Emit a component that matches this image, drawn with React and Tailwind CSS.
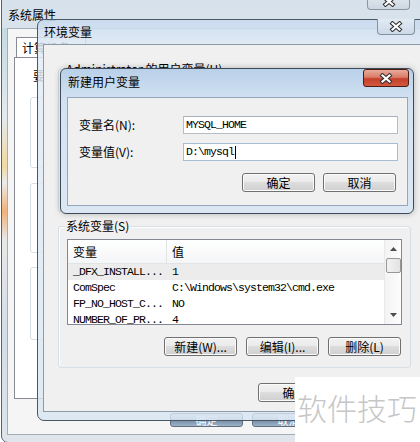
import React from "react";

const sysVars = [
  ["_DFX_INSTALL...", "1"],
  ["ComSpec", "C:\\Windows\\system32\\cmd.exe"],
  ["FP_NO_HOST_C...", "NO"],
  ["NUMBER_OF_PR...", "4"],
];

function CloseGlyph() {
  return (
    <svg width="14" height="11" viewBox="0 0 14 11">
      <path d="M3.5 2.5L10.5 8.5M10.5 2.5L3.5 8.5" stroke="#2f2f2f" strokeWidth="4.2" strokeLinecap="square" />
      <path d="M3.5 2.5L10.5 8.5M10.5 2.5L3.5 8.5" stroke="#ffffff" strokeWidth="2.2" strokeLinecap="square" />
    </svg>
  );
}

function Button({ children, className = "" }) {
  return (
    <div
      className={`flex h-[19px] w-[73px] items-center justify-center rounded-[3px] border border-[#707070] bg-[linear-gradient(180deg,#f2f2f2_0%,#ebebeb_45%,#dddddd_50%,#cfcfcf_100%)] text-[12px] leading-[14px] shadow-[inset_0_0_0_1px_#fbfbfb] ${className}`}
    >
      {children}
    </div>
  );
}

function GroupBox({ label, className = "", children }) {
  return (
    <div className={`relative rounded-[3px] border border-[#d5dfe5] shadow-[inset_1px_1px_0_#ffffff] ${className}`}>
      {label && (
        <span className="absolute left-[6px] top-[-8px] bg-[#f0f0f0] px-[1px] leading-[14px]">{label}</span>
      )}
      {children}
    </div>
  );
}

export default function App() {
  return (
    <div className="relative h-[442px] w-[420px] overflow-hidden bg-white font-['Noto_Sans_CJK_SC','Noto_Sans',sans-serif] text-[12px] text-black">
      {/* 系统属性 (background window) */}
      <div className="absolute left-[1px] top-[-6px] flex h-[449px] w-[440px] flex-col rounded-[7px] border border-[#56616d] bg-[linear-gradient(180deg,#d6e1eb_0%,#e3e9ef_30%,#dfe5eb_100%)]">
        <div className="relative h-[33px] shrink-0 pl-[6px] pt-[13px] leading-[14px]">
          系统属性
          <div className="absolute left-[365px] top-[-1px] flex h-[16px] w-[43px] items-center justify-center rounded-b-[4px] border border-t-0 border-[#8a96a3] bg-[linear-gradient(180deg,#e4eaf0,#cdd7e1)]">
            <CloseGlyph />
          </div>
        </div>
        <div className="flex flex-1">
          <div className="w-[5px] shrink-0 bg-[linear-gradient(180deg,#c3dbe2_0%,#e4eaee_22%,#f1d9a2_34%,#ececec_38%,#efb27a_45%,#e8e8e8_52%,#d3dde7_75%,#dde4ea_100%)]" />
          <div className="flex-1 border border-[#a3adb8] bg-[#f5f5f5] pl-[6px] pt-[8px]">
            <div className="ml-[2px] h-[21px] w-[70px] border border-b-0 border-[#898c95] bg-white pl-[5px] pt-[3px] leading-[14px]">
              计算机名
            </div>
            <div className="-mt-px h-[342px] w-[400px] border border-[#898c95] bg-white pl-[15px] pt-[11px]">
              <p className="ml-[3px] leading-[14px]">要进行大多数更改，您必须作为管理员登录。</p>
              <div className="mt-[14px] h-[71px] w-[360px] rounded-[3px] border border-[#d5dfe5]" />
              <div className="mt-[15px] h-[70px] w-[360px] rounded-[3px] border border-[#d5dfe5]" />
              <div className="mt-[14px] h-[73px] w-[360px] rounded-[3px] border border-[#d5dfe5]" />
            </div>
            <div className="ml-[156px] mt-[14px] flex gap-[9px]">
              {["确定", "取消", ""].map((t, i) => (
                <div
                  key={i}
                  className="flex h-[14px] w-[73px] items-center justify-center rounded-[3px] border border-[#5f6f80] bg-[linear-gradient(180deg,#dfe8f1_0%,#b4c4d6_40%,#7d94ad_60%,#9fb2c6_100%)] text-[11px] leading-none text-white"
                >
                  {t}
                </div>
              ))}
            </div>
          </div>
        </div>
        <div className="h-[7px] shrink-0" />
      </div>

      {/* 环境变量 */}
      <div className="absolute left-[37px] top-[19px] flex h-[402px] w-[395px] flex-col rounded-[7px] border border-[#4a5866] bg-[linear-gradient(180deg,rgba(200,218,238,0.85)_0%,rgba(226,236,246,0.85)_8%,rgba(216,229,242,0.8)_100%)]">
        <div className="relative h-[24px] shrink-0 pl-[6px] pt-[5px] leading-[14px]">
          环境变量
          <div className="absolute left-[339px] top-[-1px] flex h-[16px] w-[38px] items-center justify-center rounded-b-[4px] border border-t-0 border-[#8593a1] bg-[linear-gradient(180deg,#e2ebf4,#cbd9e7)]">
            <CloseGlyph />
          </div>
        </div>
        <div className="flex flex-1 px-[5px]">
          <div className="flex-1 border border-[#8d9aa8] bg-[#f0f0f0] px-[14px]">
            <GroupBox label="Administrator 的用户变量(U)" className="mt-[24px] h-[143px]" />
            <GroupBox label="系统变量(S)" className="mt-[14px] h-[142px] pl-[8px] pt-[12px]">
              <div className="flex h-[86px] w-[335px] overflow-hidden border border-[#828790] bg-white">
                <div className="flex-1">
                  <div className="flex h-[24px] border-b border-[#e2e3e5] bg-[linear-gradient(180deg,#ffffff,#f4f5f7)] leading-[14px]">
                    <div className="flex w-[99px] items-center border-r border-[#e2e3e5] pl-[5px]">变量</div>
                    <div className="flex items-center pl-[5px]">值</div>
                  </div>
                  {sysVars.map(([name, value], i) => (
                    <div
                      key={name}
                      className={`flex h-[16px] items-center font-['Liberation_Mono','DejaVu_Sans_Mono',monospace] text-[11.5px] leading-[16px] tracking-[-0.9px] ${i === 0 ? "bg-[#ececec]" : ""}`}
                    >
                      <div className="w-[99px] pl-[5px]">{name}</div>
                      <div className="pl-[5px]">{value}</div>
                    </div>
                  ))}
                </div>
                <div className="flex w-[17px] shrink-0 flex-col items-center border-l border-[#e9e9e9] bg-[linear-gradient(90deg,#f3f3f3,#fdfdfd)]">
                  <div className="flex h-[18px] items-center justify-center">
                    <svg width="7" height="4" viewBox="0 0 7 4">
                      <path d="M3.5 0L7 4H0Z" fill="#4d4d4d" />
                    </svg>
                  </div>
                  <div className="h-[15px] w-[15px] rounded-[2px] border border-[#979797] bg-[linear-gradient(90deg,#f2f2f2,#e3e3e3)]" />
                  <div className="flex-1" />
                  <div className="flex h-[18px] items-center justify-center">
                    <svg width="7" height="4" viewBox="0 0 7 4">
                      <path d="M0 0H7L3.5 4Z" fill="#4d4d4d" />
                    </svg>
                  </div>
                </div>
              </div>
              <div className="mt-[12px] flex justify-end gap-[9px] pr-[9px]">
                <Button className="w-[72px]">新建(W)...</Button>
                <Button>编辑(I)...</Button>
                <Button>删除(L)</Button>
              </div>
            </GroupBox>
            <div className="mt-[15px] flex justify-end gap-[7px]">
              <Button>确定</Button>
              <Button />
            </div>
          </div>
        </div>
        <div className="h-[8px] shrink-0" />
      </div>

      {/* 新建用户变量 */}
      <div className="absolute left-[60px] top-[68px] flex h-[146px] w-[354px] flex-col rounded-[6px] border border-[#3c4a59] bg-[linear-gradient(180deg,#b9d0e9_0%,#d3e2f2_22%,#dbe7f3_100%)] shadow-[0_0_6px_rgba(0,0,0,0.25)]">
        <div className="relative h-[28px] shrink-0 pl-[7px] pt-[6px] leading-[14px]">
          新建用户变量
          <div className="absolute left-[302px] top-0 flex h-[18px] w-[46px] items-center justify-center rounded-[3px] border border-[#4a1c14] bg-[linear-gradient(180deg,#e8aa9a_0%,#d97c68_45%,#c4412c_55%,#d2593f_100%)]">
            <CloseGlyph />
          </div>
        </div>
        <div className="flex flex-1 pl-[6px] pr-[5px]">
          <div className="flex-1 border border-[#93a6ba] bg-[#f0f0f0] pl-[11px] pr-[9px] pt-[18px]">
            <div className="flex h-[18px] items-center">
              <span className="w-[104px] leading-[14px]">变量名(N):</span>
              <div className="flex h-[18px] flex-1 items-center border border-[#b6bdc5] border-t-[#a9b0b8] bg-white pl-[2px] font-['Liberation_Mono','DejaVu_Sans_Mono',monospace] text-[11.5px] tracking-[-0.9px]">
                MYSQL_HOME
              </div>
            </div>
            <div className="mt-[9px] flex h-[18px] items-center">
              <span className="w-[104px] leading-[14px]">变量值(V):</span>
              <div className="flex h-[18px] flex-1 items-center border border-[#a7bdd5] bg-white pl-[2px] font-['Liberation_Mono','DejaVu_Sans_Mono',monospace] text-[11.5px] tracking-[-0.9px]">
                D:\mysql
                <span className="ml-[1px] h-[13px] w-px bg-black" />
              </div>
            </div>
            <div className="mt-[12px] flex justify-end gap-[8px] pr-[2px]">
              <Button>确定</Button>
              <Button>取消</Button>
            </div>
          </div>
        </div>
        <div className="h-[7px] shrink-0" />
      </div>

      {/* watermark */}
      <div className="absolute left-[295px] top-[377px] h-[65px] w-[125px] bg-white pl-[2px] pt-[14px] text-[30px] font-light leading-[32px] text-[#c6c6c6]">
        软件技巧
      </div>
    </div>
  );
}
